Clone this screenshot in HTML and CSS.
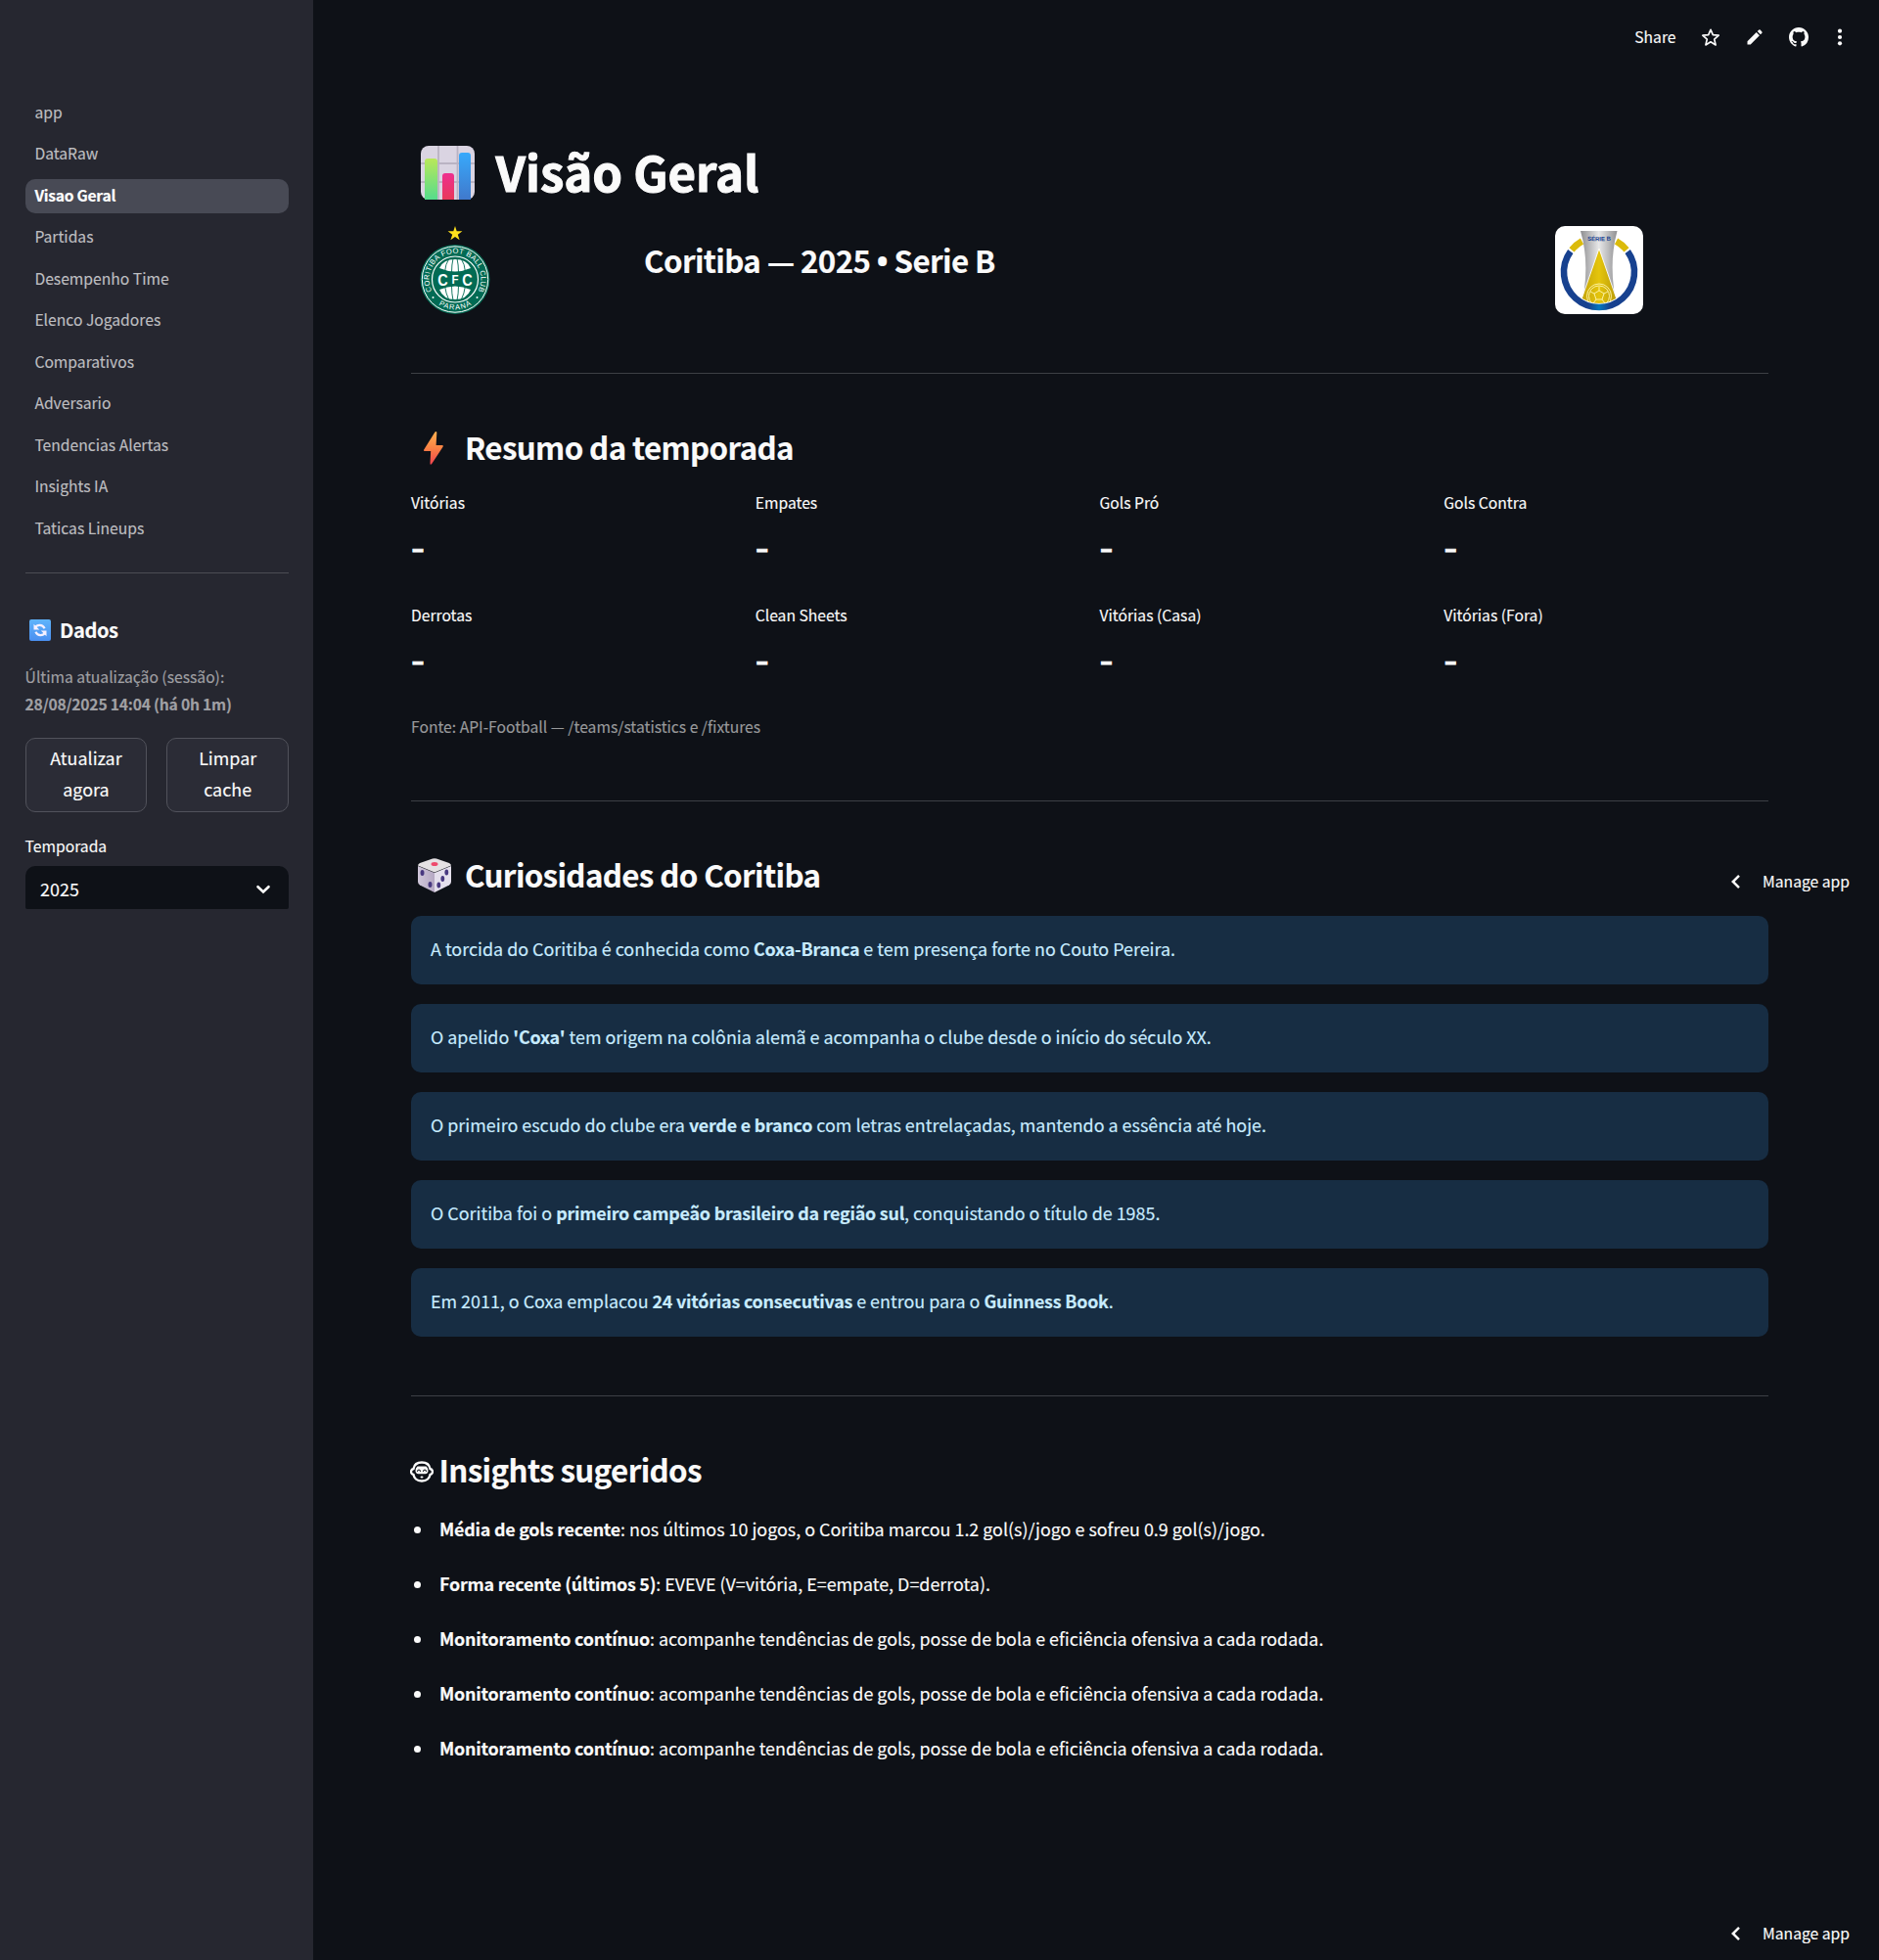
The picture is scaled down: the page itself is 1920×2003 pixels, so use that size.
FILE: index.html
```html
<!DOCTYPE html>
<html lang="pt-BR">
<head>
<meta charset="utf-8">
<title>Visão Geral</title>
<link rel="stylesheet" href="styles.css">
</head>
<body>
<div class="app">
  <aside class="sidebar">
    <nav class="nav">
      <a class="nav-item">app</a>
      <a class="nav-item">DataRaw</a>
      <a class="nav-item active">Visao Geral</a>
      <a class="nav-item">Partidas</a>
      <a class="nav-item">Desempenho Time</a>
      <a class="nav-item">Elenco Jogadores</a>
      <a class="nav-item">Comparativos</a>
      <a class="nav-item">Adversario</a>
      <a class="nav-item">Tendencias Alertas</a>
      <a class="nav-item">Insights IA</a>
      <a class="nav-item">Taticas Lineups</a>
    </nav>
    <div class="side-rule"></div>
    <h3 class="side-title">
      <svg width="22" height="22" viewBox="0 0 22 22"><defs><linearGradient id="rf" x1="0" y1="0" x2="0" y2="1"><stop offset="0" stop-color="#5fb4fb"/><stop offset="1" stop-color="#4a8ff0"/></linearGradient></defs><rect width="22" height="22" rx="2" fill="url(#rf)"/><path d="M5.8 8.6C8 5 13.4 4.800 15.6 9.200M16.200 13.400C14 17 8.600 17.200 6.400 12.800" fill="none" stroke="#f5f0ff" stroke-width="2.200"/><path d="M4.500 4.800v5.700h5.700zM17.500 17.200v-5.700h-5.700z" fill="#f5f0ff"/></svg>
      <span>Dados</span>
    </h3>
    <div class="side-caption">Última atualização (sessão):<br><b>28/08/2025 14:04 (há 0h 1m)</b></div>
    <div class="side-buttons">
      <button class="btn">Atualizar<br>agora</button>
      <button class="btn">Limpar<br>cache</button>
    </div>
    <label class="side-label">Temporada</label>
    <div class="select">
      <span>2025</span>
      <svg width="16" height="10" viewBox="0 0 16 10"><path d="M2.500 2.200 8 7.500l5.500-5.300" fill="none" stroke="#fafafa" stroke-width="2.600" stroke-linecap="round"/></svg>
    </div>
  </aside>

  <main class="main">
    <header class="toolbar">
      <span class="share">Share</span>
      <svg class="tool-star" width="20" height="20" viewBox="0 0 20 20"><path d="M10 2.300l2.300 5.400 5.900.5-4.500 3.900 1.400 5.800L10 14.800l-5.100 3.100 1.400-5.800-4.500-3.900 5.900-.5z" fill="none" stroke="#fafafa" stroke-width="1.700" stroke-linejoin="round"/></svg>
      <svg class="tool-edit" width="16" height="16" viewBox="0 0 16 16"><path d="M.5 12.300 9.700 3.100l3.200 3.200-9.200 9.200H.5zM10.700 2.100 12.300.6q.7-.6 1.300 0l1.800 1.800q.6.700 0 1.300l-1.500 1.600z" fill="#fafafa"/></svg>
      <svg class="tool-git" width="20" height="20" viewBox="0 0 16 16"><path fill="#fafafa" d="M8 0C3.580 0 0 3.580 0 8c0 3.540 2.290 6.530 5.470 7.590.4.070.55-.17.55-.38 0-.19-.01-.82-.01-1.490-2.010.37-2.530-.49-2.690-.94-.09-.23-.48-.94-.82-1.130-.28-.15-.68-.52-.01-.53.63-.01 1.080.58 1.230.82.72 1.210 1.870.87 2.330.66.07-.52.28-.87.51-1.070-1.780-.2-3.640-.89-3.640-3.950 0-.87.31-1.590.82-2.150-.08-.2-.36-1.020.08-2.120 0 0 .67-.21 2.200.82.64-.18 1.320-.27 2-.27s1.360.09 2 .27c1.530-1.040 2.200-.82 2.200-.82.44 1.100.16 1.920.08 2.120.51.56.82 1.270.82 2.150 0 3.070-1.870 3.750-3.650 3.950.29.25.54.73.54 1.480 0 1.070-.01 1.930-.01 2.200 0 .21.15.46.55.38A8.010 8.010 0 0 0 16 8c0-4.420-3.580-8-8-8z"/></svg>
      <svg class="tool-more" width="6" height="18" viewBox="0 0 6 18"><g fill="#fafafa"><circle cx="3" cy="2.700" r="2.100"/><circle cx="3" cy="9" r="2.100"/><circle cx="3" cy="15.300" r="2.100"/></g></svg>
    </header>

    <div class="content">
      <h1 class="title">
        <svg width="55" height="55" viewBox="0 0 55 55"><defs>
          <linearGradient id="b1" x1="0" y1="0" x2="0" y2="1"><stop offset="0" stop-color="#b9e85a"/><stop offset="1" stop-color="#55dc8c"/></linearGradient>
          <linearGradient id="b2" x1="0" y1="0" x2="0" y2="1"><stop offset="0" stop-color="#ee2f8f"/><stop offset="1" stop-color="#e8385a"/></linearGradient>
          <linearGradient id="b3" x1="0" y1="0" x2="0" y2="1"><stop offset="0" stop-color="#38a9fb"/><stop offset="1" stop-color="#4079cc"/></linearGradient></defs>
          <rect width="55" height="55" rx="8" fill="#dad4e2"/>
          <path d="M18 0v55M37.500 0v55M0 18h55M0 37h55" stroke="#bab3c3" stroke-width="1.800"/>
          <path d="M4 55V16q0-3 3-3h7q3 0 3 3v39z" fill="url(#b1)"/>
          <path d="M22 55V31q0-3 3-3h6q3 0 3 3v24z" fill="url(#b2)"/>
          <path d="M39 55V10q0-3 3-3h6q3 0 3 3v45z" fill="url(#b3)"/></svg>
        <span>Visão Geral</span>
      </h1>

      <div class="club">
        <svg class="crest" width="72" height="90" viewBox="0 0 72 90">
          <defs>
            <path id="arcTop" d="M11.500 64.500A26.500 26.500 0 1 1 60.500 64.500"/>
            <path id="arcBot" d="M12.500 74.500A31 31 0 0 0 59.500 74.500"/>
            <clipPath id="ball"><circle cx="36" cy="54.500" r="21.500"/></clipPath>
          </defs>
          <path d="M36 0l1.700 5.300h5.700l-4.600 3.400 1.800 5.500L36 10.900l-4.600 3.300 1.800-5.500-4.600-3.400h5.700z" fill="#ffe11c"/>
          <circle cx="36" cy="54.500" r="35.500" fill="#026b54"/>
          <circle cx="36" cy="54.500" r="33.700" fill="none" stroke="#fff" stroke-width="1"/>
          <circle cx="36" cy="54.500" r="23.500" fill="none" stroke="#fff" stroke-width="1.200"/>
          <g clip-path="url(#ball)">
            <path d="M20 43Q36 50 52 43Q48 34 36 34T20 43zM20 65Q36 58 52 65Q48 75 36 75T20 65z" fill="#fff"/>
            <path d="M34 33q-1.500 7-1.500 14M38 33q1.500 7 1.500 14M30 33q-4 6-4.500 14M42 33q4 6 4.500 14M32.500 61q0 8 1.500 15M39.500 61q0 8-1.500 15M25.500 61q1 8 4.500 15M46.500 61q-1 8-4.500 15" fill="none" stroke="#026b54" stroke-width=".9"/>
          </g>
          <text class="crest-mono" transform="translate(23.500 61) scale(.85 1)">C</text>
          <text class="crest-mono crest-f" transform="translate(36 59) scale(.85 1)">F</text>
          <text class="crest-mono" transform="translate(48.500 61) scale(.85 1)">C</text>
          <text class="crest-ring"><textPath href="#arcTop" startOffset="50%" textLength="108">CORITIBA FOOT BALL CLUB</textPath></text>
          <text class="crest-ring"><textPath href="#arcBot" startOffset="50%" textLength="35">PARANÁ</textPath></text>
          <circle cx="13.500" cy="73" r="1" fill="#fff"/><circle cx="58.500" cy="73" r="1" fill="#fff"/>
        </svg>
        <h3 class="heading club-name">Coritiba — 2025 <span class="dot">•</span> Serie B</h3>
        <svg class="league" width="90" height="90" viewBox="0 0 90 90">
          <defs>
            <linearGradient id="sil"><stop offset="0" stop-color="#8e8e90"/><stop offset=".5" stop-color="#e8e8e9"/><stop offset="1" stop-color="#919193"/></linearGradient>
            <linearGradient id="gold"><stop offset="0" stop-color="#c3a30a"/><stop offset=".5" stop-color="#e5c50c"/><stop offset="1" stop-color="#b99b08"/></linearGradient>
            <linearGradient id="blu"><stop offset="0" stop-color="#17418f"/><stop offset=".35" stop-color="#17418f"/><stop offset=".5" stop-color="#0478bd"/><stop offset=".65" stop-color="#17418f"/><stop offset="1" stop-color="#17418f"/></linearGradient>
            <path id="arcSerie" d="M30 14.500Q45 16 60 14.500"/>
          </defs>
          <rect width="90" height="90" rx="10" fill="#fff"/>
          <path d="M17 24.400A36 36 0 0 1 27.500 15.500M62.500 15.500A36 36 0 0 1 73 24.400" fill="none" stroke="#dbbb0b" stroke-width="6.600"/>
          <path d="M26 5h37.500Q56 32 60 64L61 76H29L30 64Q34 32 26 5z" fill="url(#sil)"/>
          <path d="M45 23 63 75Q62 82 45 82T27 75z" fill="url(#gold)" stroke="#fff" stroke-width=".9"/>
          <g fill="none" stroke="#fff6b0" stroke-width=".9"><circle cx="45" cy="71.500" r="12.500"/><circle cx="45" cy="71.500" r="10.500"/><path d="M45 62v4l-5 3-4-2M45 66l5 3 4-2M40 69l2 6h6l2-6M42 75l-3 4M48 75l3 4"/></g>
          <path d="M15.800 26A36 36 0 1 0 74.200 26" fill="none" stroke="#fff" stroke-width="8"/>
          <path d="M15.800 26A36 36 0 1 0 74.200 26" fill="none" stroke="url(#blu)" stroke-width="6.600"/>
          <text class="league-text"><textPath href="#arcSerie" startOffset="50%" textLength="24">SÉRIE B</textPath></text>
        </svg>
      </div>
      <div class="rule"></div>

      <section class="section">
        <h3 class="heading icon-heading">
          <svg class="ico-bolt" width="20" height="34" viewBox="0 0 20 34"><defs><linearGradient id="bolt" x1="0" y1="0" x2="0" y2="1"><stop offset="0" stop-color="#ffb050"/><stop offset=".5" stop-color="#fb8244"/><stop offset="1" stop-color="#f0434f"/></linearGradient></defs><path d="M11.500.4Q13.500-.5 13.300 1.500L12.600 14H19q1.300.3.500 1.700L8.200 33q-1.800 1.600-1.700-.8L7.200 20H.8q-1.300-.4-.6-1.600z" fill="url(#bolt)"/></svg>
          <span>Resumo da temporada</span>
        </h3>
        <div class="metrics">
          <div class="metric"><span class="metric-label">Vitórias</span><span class="metric-value">-</span></div>
          <div class="metric"><span class="metric-label">Empates</span><span class="metric-value">-</span></div>
          <div class="metric"><span class="metric-label">Gols Pró</span><span class="metric-value">-</span></div>
          <div class="metric"><span class="metric-label">Gols Contra</span><span class="metric-value">-</span></div>
          <div class="metric"><span class="metric-label">Derrotas</span><span class="metric-value">-</span></div>
          <div class="metric"><span class="metric-label">Clean Sheets</span><span class="metric-value">-</span></div>
          <div class="metric"><span class="metric-label">Vitórias (Casa)</span><span class="metric-value">-</span></div>
          <div class="metric"><span class="metric-label">Vitórias (Fora)</span><span class="metric-value">-</span></div>
        </div>
        <p class="caption">Fonte: API-Football — /teams/statistics e /fixtures</p>
      </section>
      <div class="rule"></div>

      <section class="section">
        <h3 class="heading icon-heading">
          <svg class="ico-die" width="34" height="35" viewBox="0 0 34 35"><defs><linearGradient id="dl"><stop offset="0" stop-color="#d0c7da"/><stop offset="1" stop-color="#b5a8c3"/></linearGradient></defs>
            <path d="M0 8 17 15V35L2 27.500Q0 26.500 0 24z" fill="url(#dl)"/><path d="M34 8 17 15V35l15-7.500q2-1 2-3.500z" fill="#e4dfec"/><path d="M0 7.500Q0 6 2 5L15 .5q2-.7 4 0L32 5q2 1 2 2.500L17 14.500z" fill="#e4e1e3"/>
            <ellipse cx="17" cy="6" rx="3.500" ry="2" fill="#ee4a6c"/><g fill="#483880"><ellipse cx="4.500" cy="15" rx="2" ry="3"/><ellipse cx="12.500" cy="27" rx="2" ry="3"/><ellipse cx="29.300" cy="14.500" rx="1.900" ry="2.900"/><ellipse cx="25.300" cy="21" rx="1.900" ry="2.900"/><ellipse cx="21.300" cy="27.500" rx="1.900" ry="2.900"/></g></svg>
          <span>Curiosidades do Coritiba</span>
        </h3>
        <div class="facts">
          <div class="fact">A torcida do Coritiba é conhecida como <b>Coxa-Branca</b> e tem presença forte no Couto Pereira.</div>
          <div class="fact">O apelido <b>'Coxa'</b> tem origem na colônia alemã e acompanha o clube desde o início do século XX.</div>
          <div class="fact">O primeiro escudo do clube era <b>verde e branco</b> com letras entrelaçadas, mantendo a essência até hoje.</div>
          <div class="fact">O Coritiba foi o <b>primeiro campeão brasileiro da região sul</b>, conquistando o título de 1985.</div>
          <div class="fact">Em 2011, o Coxa emplacou <b>24 vitórias consecutivas</b> e entrou para o <b>Guinness Book</b>.</div>
        </div>
      </section>
      <div class="rule"></div>

      <section class="section">
        <h3 class="heading insight-heading">
          <svg width="24" height="22" viewBox="0 0 24 22"><path d="M12 1.500C18 1.500 20 5 20.500 8Q23 8.500 23 11T20.500 14C20 17 17.500 20.500 12 20.500S4 17 3.500 14Q1 13.500 1 11T3.500 8C4 5 6 1.500 12 1.500z" fill="none" stroke="#fafafa" stroke-width="2.300"/><path d="M7.500 5.500h9Q18.500 7 18.500 10T15.500 13.200h-7Q5.500 13 5.500 10T7.500 5.500z" fill="#fafafa"/><path d="M7.300 10.700q1.700-3.400 3.400 0M13.300 10.700q1.700-3.400 3.400 0" stroke="#0e1117" stroke-width="1.200" fill="none"/><ellipse cx="12" cy="16.500" rx="1.500" ry="1.100" fill="#fafafa"/></svg>
          <span>Insights sugeridos</span>
        </h3>
        <ul class="insights">
          <li><b>Média de gols recente</b>: nos últimos 10 jogos, o Coritiba marcou 1.2 gol(s)/jogo e sofreu 0.9 gol(s)/jogo.</li>
          <li><b>Forma recente (últimos 5)</b>: EVEVE (V=vitória, E=empate, D=derrota).</li>
          <li><b>Monitoramento contínuo</b>: acompanhe tendências de gols, posse de bola e eficiência ofensiva a cada rodada.</li>
          <li><b>Monitoramento contínuo</b>: acompanhe tendências de gols, posse de bola e eficiência ofensiva a cada rodada.</li>
          <li><b>Monitoramento contínuo</b>: acompanhe tendências de gols, posse de bola e eficiência ofensiva a cada rodada.</li>
        </ul>
      </section>
    </div>
  </main>

  <div class="manage manage-float"><svg width="11" height="16" viewBox="0 0 11 16"><path d="M9 1.800 2.800 8 9 14.200" fill="none" stroke="#fafafa" stroke-width="2.500"/></svg><span>Manage app</span></div>
  <div class="manage manage-bottom"><svg width="11" height="16" viewBox="0 0 11 16"><path d="M9 1.800 2.800 8 9 14.200" fill="none" stroke="#fafafa" stroke-width="2.500"/></svg><span>Manage app</span></div>
</div>
</body>
</html>
```
FILE: styles.css
```css
* { box-sizing: border-box; }

:root {
  --fs-body: 17.9px;
  --fs-small: 15.67px;
  --fs-heading: 31.3px;
}

body {
  margin: 0;
  background: #0e1117;
  color: #fafafa;
  font-family: "Noto Sans CJK SC", "Noto Sans", sans-serif;
  font-size: var(--fs-body);
  line-height: 32px;
  -webkit-text-stroke: 0.15px;
}

h1, h3, p, ul { margin: 0; padding: 0; }
b { letter-spacing: -0.22px; }
svg { display: block; flex: none; }
svg text { -webkit-text-stroke: 0; }

.app { position: relative; display: flex; height: 2003px; overflow: hidden; }

/* Sidebar */
.sidebar { width: 320px; flex: none; background: #262730; padding: 98px 25px 0 25.6px; }
.nav { display: flex; flex-direction: column; gap: 7.5px; }
.nav-item {
  height: 35px;
  padding: 0.5px 0 0 9.8px;
  border-radius: 10px;
  font-size: var(--fs-small);
  line-height: 32px;
  color: #bebec0;
}
.nav-item.active { background: #484a55; color: #fff; font-weight: 700; letter-spacing: -0.27px; }
.side-rule { height: 1px; margin-top: 27px; background: #4b4c54; }
.side-title { display: flex; align-items: center; gap: 9.5px; height: 30px; margin-top: 43px; padding-left: 4px; font-size: 20.1px; line-height: 28px; letter-spacing: -0.45px; }
.side-caption { margin-top: 19px; font-size: var(--fs-small); line-height: 28px; color: #a0a0a4; white-space: nowrap; }
.side-buttons { display: grid; grid-template-columns: 1fr 1fr; gap: 20px; margin-top: 20px; }
.btn {
  height: 76px;
  padding: 3px 0 7px;
  border: 1px solid #51525b;
  border-radius: 10px;
  background: #2b2c36;
  color: #fafafa;
  font: inherit;
}
.side-label { display: block; margin-top: 21px; font-size: var(--fs-small); line-height: 28px; }
.select { display: flex; align-items: center; justify-content: space-between; height: 44px; margin-top: 6px; padding: 3px 18px 0 15.5px; border-radius: 10px 10px 2px 2px; background: #0e1117; }
.select span { margin-top: -2px; }

/* Main column */
.main { flex: 1; }
.toolbar { display: flex; align-items: center; justify-content: flex-end; height: 75px; padding-right: 37px; font-size: var(--fs-small); line-height: 28px; }
.share { margin-right: 25.5px; }
.tool-edit { margin-left: 27px; }
.tool-git { margin-left: 27px; }
.tool-more { margin-left: 29px; }
.content { width: 1487px; padding: 67px 0 0 100px; }
.title { display: flex; align-items: center; gap: 21.5px; height: 66px; padding-left: 10px; font-size: 49.2px; line-height: 66px; -webkit-text-stroke: 1px; }
.title svg { margin-top: 3px; }
.heading { font-size: var(--fs-heading); line-height: 42px; font-weight: 700; letter-spacing: -0.62px; white-space: nowrap; }
.club { display: grid; grid-template-columns: 238px 1fr 218px; height: 90px; margin-top: 23px; }
.crest { margin-left: 9px; }
.crest-ring { fill: #fff; font: 7.5px "Liberation Sans", sans-serif; text-anchor: middle; }
.crest-mono { fill: #fff; font: bold 17px "Liberation Sans", sans-serif; text-anchor: middle; }
.crest-f { font-size: 13.5px; }
.club-name { padding-top: 14px; }
.dot { font-family: "Open Sans", "Noto Sans", sans-serif; }
.league-text { fill: #17418f; font: bold 6px "Liberation Sans", sans-serif; text-anchor: middle; }
.rule { height: 1px; margin-top: 60px; background: #3d4045; }
.section { padding-top: 54px; }
.icon-heading { display: grid; grid-template-columns: 55px 1fr; align-items: center; }
.ico-bolt { margin: 2px 0 0 13px; }
.ico-die { margin-left: 7px; }

.metrics { display: grid; grid-template-columns: repeat(4, 1fr); gap: 20px; margin-top: 22px; }
.metric { display: flex; flex-direction: column; height: 95px; }
.metric-label { font-size: var(--fs-small); line-height: 28px; }
.metric-value { font-size: 40.3px; line-height: 58px; -webkit-text-stroke: 0.8px; }
.caption { margin-top: 19px; padding-bottom: 1px; font-size: var(--fs-small); line-height: 28px; color: #98999b; }

.facts { display: flex; flex-direction: column; gap: 20px; margin-top: 21px; }
.fact { height: 70px; padding: 17px 20px; border-radius: 10px; background: #172d43; color: #c7ebff; white-space: nowrap; }

.insight-heading { display: flex; align-items: center; gap: 5.5px; margin-left: -1px; }
.insight-heading svg { margin-top: 3px; }
.insights { list-style: none; display: flex; flex-direction: column; gap: 24px; margin-top: 23px; }
.insights li { display: flex; align-items: center; white-space: pre; }
.insights li::before { content: ""; width: 7px; height: 7px; margin: 3px 19px 0 3px; border-radius: 50%; background: #fafafa; }

/* Floating links over the page */
.manage { position: absolute; right: 30px; display: flex; align-items: center; gap: 22px; font-size: var(--fs-small); line-height: 28px; }
.manage-float { top: 887px; }
.manage-bottom { bottom: 13px; }
```
